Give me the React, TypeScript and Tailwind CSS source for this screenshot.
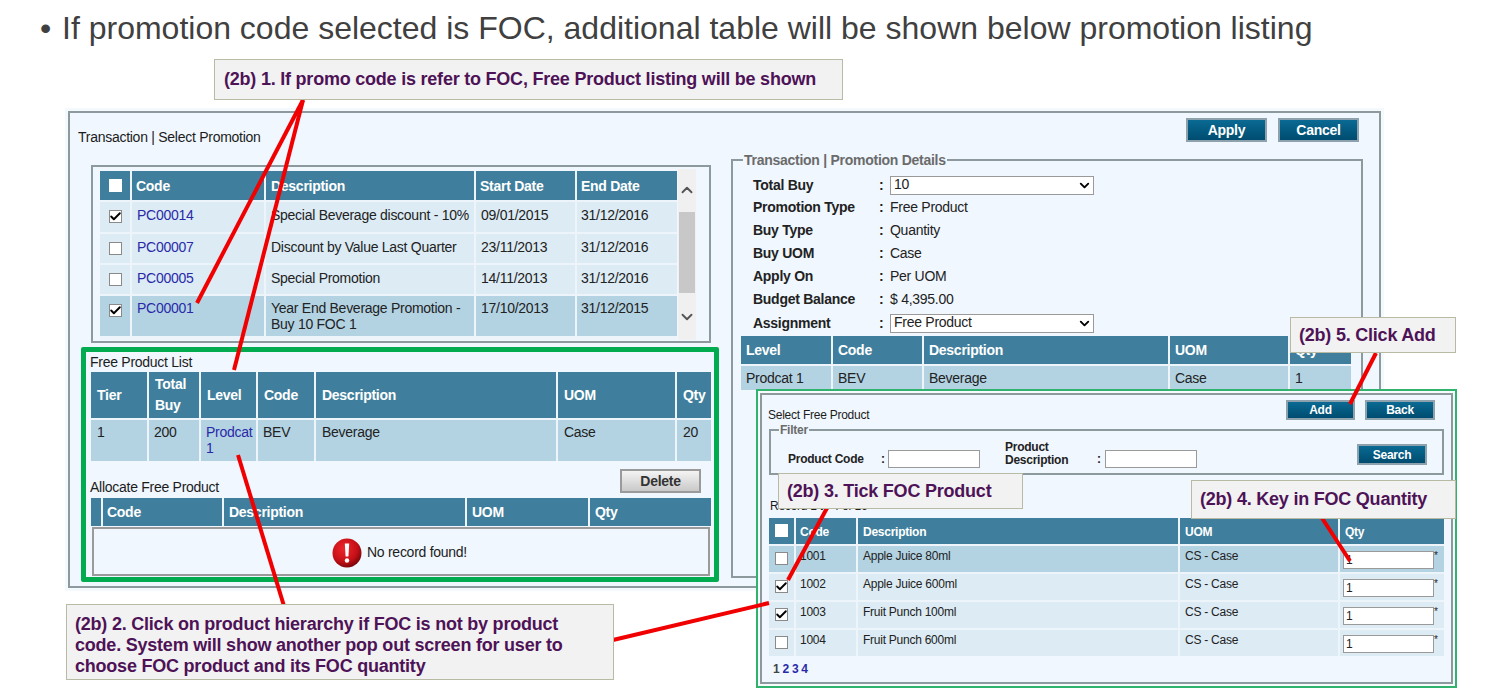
import type { ReactNode } from "react"
import { Check, ChevronDown, ChevronUp } from "lucide-react"

// Shared cell styles
const head = "bg-[#3f7f9d] text-white font-bold flex items-center"
const rowLight = "bg-[#dcebf4]"
const rowDark = "bg-[#b3d3e3]"
const link = "text-[#2a2aa8]"

function Box({ checked, plain }: { checked?: boolean; plain?: boolean }) {
  return (
    <span
      className={`flex h-[13px] w-[13px] items-center justify-center bg-white ${
        plain ? "" : "border border-[#8a8a8a]"
      }`}
    >
      {checked && <Check className="h-[13px] w-[13px] shrink-0 text-black" strokeWidth={3.5} />}
    </span>
  )
}

function DarkButton({ label, className }: { label: string; className: string }) {
  return (
    <button
      type="button"
      className={`flex items-center justify-center border-2 border-[#8ea2ad] bg-linear-to-b from-[#0b6a93] to-[#004c70] font-bold text-white ${className}`}
    >
      {label}
    </button>
  )
}

function Callout({ className, children }: { className: string; children: ReactNode }) {
  return (
    <div className={`absolute border border-[#b9baa3] bg-[#f2f2f2] text-[18px] font-bold tracking-[-0.22px] text-[#4e1257] ${className}`}>
      {children}
    </div>
  )
}

function FakeSelect({ value }: { value: string }) {
  return (
    <div className="flex h-[19px] w-[204px] items-center justify-between border border-[#9a9a9a] bg-white pl-[3px] pr-[1px] leading-none text-[#222]">
      <span className="-mt-[3px]">{value}</span>
      <ChevronDown className="h-[15px] w-[15px] text-black" strokeWidth={3} />
    </div>
  )
}

function ErrorIcon() {
  return (
    <svg width="30" height="30" viewBox="0 0 30 30">
      <defs>
        <radialGradient id="err" cx="40%" cy="35%" r="70%">
          <stop offset="0%" stopColor="#f0262c" />
          <stop offset="65%" stopColor="#c40f17" />
          <stop offset="100%" stopColor="#6e0508" />
        </radialGradient>
      </defs>
      <circle cx="15" cy="15" r="14.5" fill="url(#err)" />
      <path d="M12.8 5.5h4.4l-.8 13h-2.8z" fill="#fff" />
      <circle cx="15" cy="22.5" r="2.2" fill="#fff" />
    </svg>
  )
}

const promos = [
  { code: "PC00014", desc: "Special Beverage discount - 10%", start: "09/01/2015", end: "31/12/2016", on: true, h: "h-[30px]" },
  { code: "PC00007", desc: "Discount by Value Last Quarter", start: "23/11/2013", end: "31/12/2016", on: false, h: "h-[29px]" },
  { code: "PC00005", desc: "Special Promotion", start: "14/11/2013", end: "31/12/2016", on: false, h: "h-[29px]" },
]

const details = [
  ["Promotion Type", "Free Product"],
  ["Buy Type", "Quantity"],
  ["Buy UOM", "Case"],
  ["Apply On", "Per UOM"],
  ["Budget Balance", "$ 4,395.00"],
]

const products = [
  { code: "1001", desc: "Apple Juice 80ml", on: false, dark: true },
  { code: "1002", desc: "Apple Juice 600ml", on: true, dark: false },
  { code: "1003", desc: "Fruit Punch 100ml", on: true, dark: false },
  { code: "1004", desc: "Fruit Punch 600ml", on: false, dark: false },
]

export default function App() {
  return (
    <div className="relative h-[694px] w-[1502px] overflow-hidden bg-white font-['Liberation_Sans',Arial,sans-serif] text-[14px] tracking-[-0.27px] text-[#222]">
      {/* Slide title */}
      <div className="flex h-[108px] items-start pl-[40px] pt-[9px] text-[32px] leading-[38px] tracking-normal text-[#404040]">
        <span className="w-[22px]">•</span>
        <span>If promotion code selected is FOC, additional table will be shown below promotion listing</span>
      </div>

      {/* Main window */}
      <div className="ml-[65px] w-[1319px] bg-[#f4f9fd] p-[3px]">
        <div className="flex h-[477px] border-2 border-[#8c9a9e] bg-[#f0f7fe]">
          {/* Left column */}
          <div className="w-[652px] pl-[8px] pt-[14px]">
            <div className="h-[20px] leading-[21px] text-[#1c1c1c]">Transaction | Select Promotion</div>

            <div className="ml-[13px] mt-[18px] flex h-[178px] w-[620px] border-2 border-[#8c9a9e] pl-[7px] pt-[4px]">
              <div className="grid h-[169px] grid-cols-[30px_132px_208px_99px_100px] content-start gap-[2px] overflow-hidden bg-[#eef5fa]">
                <div className={`${head} h-[29px] justify-center`}>
                  <Box plain />
                </div>
                <div className={`${head} pl-[4px] pt-[1px]`}>Code</div>
                <div className={`${head} pl-[5px] pt-[1px]`}>Description</div>
                <div className={`${head} pl-[4px] pt-[1px]`}>Start Date</div>
                <div className={`${head} pl-[4px] pt-[1px]`}>End Date</div>
                {promos.map((p) => (
                  <div key={p.code} className="contents">
                    <div className={`${rowLight} ${p.h} flex justify-center pt-[8px]`}>
                      <Box checked={p.on} />
                    </div>
                    <div className={`${rowLight} ${link} pl-[5px] pt-[3px]`}>{p.code}</div>
                    <div className={`${rowLight} pl-[5px] pt-[3px]`}>{p.desc}</div>
                    <div className={`${rowLight} pl-[5px] pt-[3px]`}>{p.start}</div>
                    <div className={`${rowLight} pl-[4px] pt-[3px]`}>{p.end}</div>
                  </div>
                ))}
                <div className={`${rowDark} flex h-[40px] justify-center pt-[8px]`}>
                  <Box checked />
                </div>
                <div className={`${rowDark} ${link} pl-[5px] pt-[2px]`}>PC00001</div>
                <div className={`${rowDark} pl-[5px] pt-[4px] leading-[16px]`}>
                  Year End Beverage Promotion -<br />
                  Buy 10 FOC 1
                </div>
                <div className={`${rowDark} pl-[5px] pt-[2px]`}>17/10/2013</div>
                <div className={`${rowDark} pl-[4px] pt-[2px]`}>31/12/2015</div>
              </div>

              {/* Scrollbar */}
              <div className="-mt-[2px] ml-px flex h-[171px] w-[18px] flex-col items-center bg-[#f0f0f0]">
                <ChevronUp className="mt-[12px] h-[18px] w-[18px] text-[#555]" strokeWidth={2.5} />
                <div className="mt-[13px] h-[81px] w-[16px] bg-[#c8c8c8]" />
                <ChevronDown className="mt-[15px] h-[18px] w-[18px] text-[#555]" strokeWidth={2.5} />
              </div>
            </div>

            {/* Highlighted free product section */}
            <div className="ml-[3px] mt-[4px] h-[235px] w-[638px] rounded-[2px] border-[5px] border-[#00ac4f] pl-[4px]">
              <div className="h-[20px] leading-[21px] text-[#1c1c1c]">Free Product List</div>
              <div className="ml-px grid w-[620px] grid-cols-[56px_50px_55px_56px_240px_117px_34px] gap-[2px] bg-[#eef5fa] leading-[21px]">
                <div className={`${head} h-[46px] pl-[6px]`}>Tier</div>
                <div className={`${head} pl-[6px]`}>
                  Total
                  <br />
                  Buy
                </div>
                <div className={`${head} pl-[6px]`}>Level</div>
                <div className={`${head} pl-[6px]`}>Code</div>
                <div className={`${head} pl-[6px]`}>Description</div>
                <div className={`${head} pl-[6px]`}>UOM</div>
                <div className={`${head} pl-[6px]`}>Qty</div>
                <div className={`${rowDark} h-[41px] pl-[6px] pt-[2px]`}>1</div>
                <div className={`${rowDark} pl-[5px] pt-[2px]`}>200</div>
                <div className={`${rowDark} ${link} pl-[5px] pt-[4px] leading-[16px]`}>
                  Prodcat
                  <br />1
                </div>
                <div className={`${rowDark} pl-[5px] pt-[2px]`}>BEV</div>
                <div className={`${rowDark} pl-[6px] pt-[2px]`}>Beverage</div>
                <div className={`${rowDark} pl-[6px] pt-[2px]`}>Case</div>
                <div className={`${rowDark} pl-[6px] pt-[2px]`}>20</div>
              </div>
              <div className="flex h-[37px] items-end justify-between pr-[13px]">
                <span className="mb-px leading-[20px] text-[#1c1c1c]">Allocate Free Product</span>
                <button
                  type="button"
                  className="mb-[5px] flex h-[24px] w-[81px] items-center justify-center border-2 border-[#9a9a9a] bg-linear-to-b from-[#f4f4f4] to-[#c9c9c9] font-bold text-[#333]"
                >
                  Delete
                </button>
              </div>
              <div className="ml-px grid h-[28px] w-[620px] grid-cols-[10px_119px_241px_121px_121px] gap-[2px] bg-[#eef5fa]">
                <div className={head} />
                <div className={`${head} pl-[4px]`}>Code</div>
                <div className={`${head} pl-[5px]`}>Description</div>
                <div className={`${head} pl-[5px]`}>UOM</div>
                <div className={`${head} pl-[5px]`}>Qty</div>
              </div>
              <div className="ml-[2px] mt-px flex h-[49px] w-[618px] items-center border-2 border-[#9a9a9a] pl-[238px] pt-[2px]">
                <ErrorIcon />
                <span className="ml-[5px] text-[#1c1c1c]">No record found!</span>
              </div>
            </div>
          </div>

          {/* Right column */}
          <div className="flex-1">
            <div className="flex justify-end gap-[11px] pr-[20px] pt-[5px]">
              <DarkButton label="Apply" className="h-[24px] w-[81px]" />
              <DarkButton label="Cancel" className="h-[24px] w-[81px]" />
            </div>
            <fieldset className="ml-[9px] mt-[9px] h-[427px] w-[632px] border-2 border-[#8c9a9e]">
              <legend className="ml-[10px] px-[1px] font-bold leading-[18px] text-[#6b6b6b]">
                Transaction | Promotion Details
              </legend>
              <div className="pl-[20px] pt-[5px]">
                <div className="flex h-[22px] items-center">
                  <span className="w-[126px] font-bold">Total Buy</span>
                  <span className="w-[11px] font-bold">:</span>
                  <FakeSelect value="10" />
                </div>
                {details.map(([label, value]) => (
                  <div key={label} className="flex h-[23px] items-center">
                    <span className="w-[126px] font-bold">{label}</span>
                    <span className="w-[11px] font-bold">:</span>
                    <span>{value}</span>
                  </div>
                ))}
                <div className="flex h-[25px] items-center">
                  <span className="w-[126px] font-bold">Assignment</span>
                  <span className="w-[11px] font-bold">:</span>
                  <FakeSelect value="Free Product" />
                </div>
              </div>
              <div className="ml-[8px] grid w-[610px] grid-cols-[90px_89px_244px_118px_61px] gap-[2px] bg-[#eef5fa]">
                <div className={`${head} h-[28px] pl-[5px]`}>Level</div>
                <div className={`${head} pl-[5px]`}>Code</div>
                <div className={`${head} pl-[5px]`}>Description</div>
                <div className={`${head} pl-[5px]`}>UOM</div>
                <div className={`${head} pl-[5px]`}>Qty</div>
                <div className={`${rowDark} h-[24px] pl-[5px] pt-[2px]`}>Prodcat 1</div>
                <div className={`${rowDark} pl-[5px] pt-[2px]`}>BEV</div>
                <div className={`${rowDark} pl-[5px] pt-[2px]`}>Beverage</div>
                <div className={`${rowDark} pl-[5px] pt-[2px]`}>Case</div>
                <div className={`${rowDark} pl-[5px] pt-[2px]`}>1</div>
              </div>
            </fieldset>
          </div>
        </div>
      </div>

      {/* Select Free Product pop out */}
      <div className="absolute left-[756px] top-[389px] h-[299px] w-[701px] border-2 border-[#2fb36d] bg-[#f8fbfe] p-[2px] text-[12px] tracking-[-0.25px]">
        <div className="h-full border-2 border-[#8c9a9e] bg-[#f0f7fe]">
          <div className="flex h-[25px] items-start justify-between pl-[6px] pr-[16px] pt-[5px]">
            <span className="mt-[8px] leading-[14px] text-[#1c1c1c]">Select Free Product</span>
            <div className="flex gap-[10px]">
              <DarkButton label="Add" className="h-[20px] w-[69px]" />
              <DarkButton label="Back" className="h-[20px] w-[70px]" />
            </div>
          </div>
          <fieldset className="ml-[7px] mt-[3px] h-[52px] w-[675px] border-2 border-[#8c9a9e]">
            <legend className="ml-[8px] px-[1px] font-bold leading-[14px] text-[#6b6b6b]">Filter</legend>
            <div className="flex h-[31px] items-end pl-[17px] font-bold">
              <span className="w-[93px]">Product Code</span>
              <span className="w-[7px]">:</span>
              <div className="h-[18px] w-[92px] border border-[#9a9a9a] bg-white" />
              <span className="ml-[25px] mb-[1px] w-[92px] leading-[13px]">
                Product
                <br />
                Description
              </span>
              <span className="w-[8px]">:</span>
              <div className="h-[18px] w-[92px] border border-[#9a9a9a] bg-white" />
              <div className="ml-auto mb-[3px] mr-[15px]">
                <DarkButton label="Search" className="h-[21px] w-[70px]" />
              </div>
            </div>
          </fieldset>
          <div className="ml-[8px] mt-[24px] h-[14px] leading-[14px] text-[#1c1c1c]">Record 1 to 4 of 16</div>
          <div className="ml-[7px] mt-[5px] grid w-[675px] grid-cols-[25px_60px_320px_158px_104px] gap-[2px] bg-[#eef5fa]">
            <div className={`${head} h-[26px] justify-center pb-[2px]`}>
              <Box plain />
            </div>
            <div className={`${head} pl-[4px] pt-[1px]`}>Code</div>
            <div className={`${head} pl-[5px] pt-[1px]`}>Description</div>
            <div className={`${head} pl-[5px] pt-[1px]`}>UOM</div>
            <div className={`${head} pl-[5px] pt-[1px]`}>Qty</div>
            {products.map((p) => {
              const bg = p.dark ? rowDark : rowLight
              return (
                <div key={p.code} className="contents">
                  <div className={`${bg} flex h-[26px] justify-center pt-[6px]`}>
                    <Box checked={p.on} />
                  </div>
                  <div className={`${bg} pl-[4px] pt-[1px]`}>{p.code}</div>
                  <div className={`${bg} pl-[5px] pt-[1px]`}>{p.desc}</div>
                  <div className={`${bg} pl-[5px] pt-[1px]`}>CS - Case</div>
                  <div className={`${bg} flex items-start pl-[3px] pt-[5px]`}>
                    <div className="flex h-[18px] w-[91px] items-center border border-[#9a9a9a] bg-white pl-[2px]">1</div>
                    <span className="text-[10px] leading-[10px]">*</span>
                  </div>
                </div>
              )
            })}
          </div>
          <div className="ml-[11px] mt-[6px] flex gap-[3px] text-[12px] font-bold leading-[14px]">
            <span className="text-[#444]">1</span>
            <span className={link}>2</span>
            <span className={link}>3</span>
            <span className={link}>4</span>
          </div>
        </div>
      </div>

      {/* Red annotation lines */}
      <svg className="pointer-events-none absolute left-0 top-0" width="1502" height="694">
        <g stroke="#f00000" strokeWidth="4" fill="none">
          <path d="M303 100L197 303" />
          <path d="M303 100L234 370" />
          <path d="M238 455L284 606" />
          <path d="M613 640L769 603" />
          <path d="M827 508L788 580" />
          <path d="M1322 518L1350 561" />
          <path d="M1376 353L1350 404" />
        </g>
      </svg>

      {/* Callouts */}
      <Callout className="left-[214px] top-[59px] flex h-[41px] w-[629px] items-center pl-[9px]">
        (2b) 1. If promo code is refer to FOC, Free Product listing will be shown
      </Callout>
      <Callout className="left-[66px] top-[604px] h-[76px] w-[548px] pl-[8px] pt-[9px] leading-[21px]">
        (2b) 2. Click on product hierarchy if FOC is not by product
        <br />
        code. System will show another pop out screen for user to
        <br />
        choose FOC product and its FOC quantity
      </Callout>
      <Callout className="left-[778px] top-[473px] flex h-[36px] w-[245px] items-center pl-[8px]">
        (2b) 3. Tick FOC Product
      </Callout>
      <Callout className="left-[1191px] top-[480px] flex h-[39px] w-[265px] items-center pl-[8px]">
        (2b) 4. Key in FOC Quantity
      </Callout>
      <Callout className="left-[1290px] top-[317px] flex h-[36px] w-[166px] items-center pl-[8px]">
        (2b) 5. Click Add
      </Callout>
    </div>
  )
}
